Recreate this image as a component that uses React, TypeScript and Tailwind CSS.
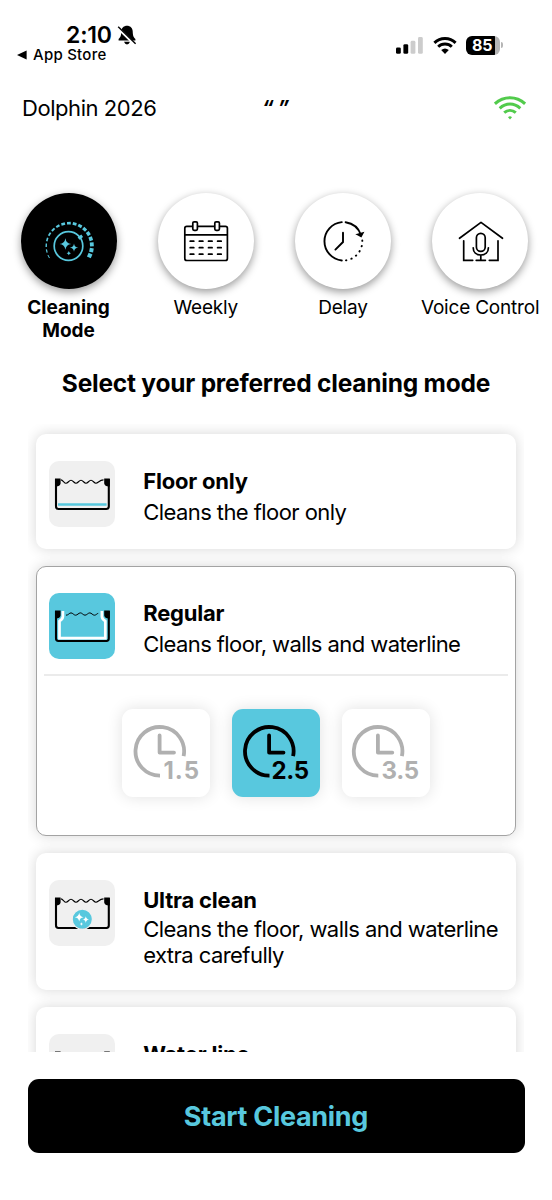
import type { ReactNode } from "react";

const ACCENT = "#58c8de";

function star(x: number, y: number, r: number) {
  const k = r * 0.12;
  return `M${x} ${y - r}Q${x + k} ${y - k} ${x + r} ${y}Q${x + k} ${y + k} ${x} ${y + r}Q${x - k} ${y + k} ${x - r} ${y}Q${x - k} ${y - k} ${x} ${y - r}Z`;
}

function DialIcon() {
  const cx = 48.3;
  const cy = 53;
  const count = 17;
  const ticks = Array.from({ length: count }, (_, i) => {
    const t = i / (count - 1);
    const a = ((153 + t * 232) * Math.PI) / 180;
    const half = 0.075 + t * 0.015;
    const r = 23.2 - t * 0.6;
    return {
      w: 1 + t * 3.2,
      d: `M${cx + r * Math.cos(a - half)} ${cy + r * Math.sin(a - half)}L${cx + r * Math.cos(a + half)} ${cy + r * Math.sin(a + half)}`,
    };
  });
  return (
    <svg viewBox="0 0 96 96" className="size-24" fill="none" stroke={ACCENT}>
      {ticks.map((t) => (
        <path key={t.d} d={t.d} strokeWidth={t.w} />
      ))}
      <circle cx="47.5" cy="53" r="14.3" strokeWidth="1.7" />
      <path d="M57.5 45.5L61.2 42.8" strokeWidth="3" />
      <path d={star(44.4, 51, 5.8) + star(53, 54.6, 4.2) + star(47.8, 60.2, 2.2)} fill={ACCENT} stroke="none" />
    </svg>
  );
}

function CalendarIcon() {
  return (
    <svg viewBox="0 0 96 96" className="size-24" fill="none" stroke="#000" strokeWidth="1.7">
      <rect x="26.8" y="33.3" width="42.6" height="34.2" rx="2" />
      <path d="M27 41.8H69.4" />
      <rect x="34.8" y="28.8" width="4.6" height="8.6" rx="1.3" fill="#fff" />
      <rect x="56.8" y="28.8" width="4.6" height="8.6" rx="1.3" fill="#fff" />
      {[48.2, 54.7, 61.2].map((y) => (
        <path key={y} d={`M32.2 ${y}h3.6M41.3 ${y}h3.6M50.5 ${y}h3.6M59.6 ${y}h3.6`} strokeLinecap="round" />
      ))}
    </svg>
  );
}

function DelayIcon() {
  return (
    <svg viewBox="0 0 96 96" className="size-24" fill="none" stroke="#000" strokeWidth="1.9" strokeLinecap="round">
      <path d="M46.8 29.1A19.3 19.3 0 0 0 46.8 67.5" />
      <path d="M50.6 29.2A19.3 19.3 0 0 1 66 42" />
      <path d="M62.8 41.5L66 43.3L67.6 40.2Z" fill="#000" />
      <path d="M67.3 47.5A19.3 19.3 0 0 1 49 67.6" strokeDasharray="0.4 5.1" />
      <path d="M48 39.8V49L40.4 56.6" />
    </svg>
  );
}

function VoiceIcon() {
  return (
    <svg viewBox="0 0 96 96" className="size-24" fill="none" stroke="#000" strokeWidth="1.7" strokeLinecap="round">
      <path d="M27.5 45.3L49 29.4L70.5 45.3" strokeLinejoin="round" />
      <path d="M31.7 47.8V67.3H40.7M66 47.8V67.3H57.3" />
      <rect x="44.4" y="40.4" width="8.8" height="18" rx="4.4" />
      <path d="M41.2 54.8C41.2 59.4 44.4 62 48.8 62S56.4 59.4 56.4 54.8M48.8 62V67.3M44.2 67.3H53.4" />
    </svg>
  );
}

type PoolKind = "floor" | "walls" | "ultra";

function PoolIcon({ kind }: { kind: PoolKind }) {
  return (
    <svg viewBox="0 0 66 66" className="size-[66px]" fill="none" stroke="#000">
      <path d="M7 18V45.6Q7 48 9.4 48H57.4Q59.8 48 59.8 45.6V18" strokeWidth="2.1" />
      <path d="M6 17.4H11.6V22.4Q11 25.2 7 25.6H6ZM60.8 17.4H55.2V22.4Q55.8 25.2 59.8 25.6H60.8Z" fill="#000" stroke="none" />
      {kind === "walls" ? (
        <>
          <path
            d="M17 22.2C19.5 22.2 20.2 19.9 22 19.9S24.8 22.2 26.6 22.2S29.6 19.9 31.4 19.9S34.2 22.2 36 22.2S39 19.9 40.8 19.9S43.6 22.2 45.4 22.2S48 20.4 49.2 20.4"
            strokeWidth="1"
          />
          <path
            d="M13.9 18V23.6Q13.8 26 10.5 28.2V45.2H56.3V28.2Q53 26 52.9 23.6V18"
            stroke="#fff"
            strokeWidth="2.7"
          />
        </>
      ) : (
        <path
          d="M12 18.9C14 18.9 15 22.3 17 22.3S20 19.2 22 19.2S25 22.3 27 22.3S30 19.2 32 19.2S35 22.3 37 22.3S40 19.2 42 19.2S45 22.3 47 22.3S50.5 18.9 54.5 18.9"
          strokeWidth="1.1"
        />
      )}
      {kind === "floor" && <path d="M9 43.6H57.6" stroke={ACCENT} strokeWidth="2.5" />}
      {kind === "ultra" && (
        <>
          <circle cx="33.3" cy="39.2" r="10.1" fill={ACCENT} stroke="#f0f0f0" strokeWidth="1.2" />
          <path d={star(30.2, 37.2, 4.4) + star(36.8, 39.6, 3.4) + star(32.4, 44, 1.7)} fill="#fff" stroke="none" />
        </>
      )}
    </svg>
  );
}

function Mode({ label, active, children }: { label: string; active?: boolean; children: ReactNode }) {
  return (
    <div className="flex w-[137.2px] shrink-0 flex-col items-center">
      <div
        className={
          active
            ? "size-24 rounded-full bg-black shadow-[0_3px_8px_rgba(0,0,0,0.4)]"
            : "size-24 rounded-full bg-white shadow-[0_3px_8px_rgba(0,0,0,0.4)]"
        }
      >
        {children}
      </div>
      <div
        className={
          active
            ? "mt-[7px] w-[100px] text-center text-[19px] font-bold leading-[23px]"
            : "mt-[7px] whitespace-nowrap text-center text-[19px] leading-[23px] tracking-[-0.2px]"
        }
      >
        {label}
      </div>
    </div>
  );
}

function Tile({ kind, active }: { kind: PoolKind; active?: boolean }) {
  return (
    <div className={active ? "size-[66px] shrink-0 rounded-[10px] bg-[#58c8de]" : "size-[66px] shrink-0 rounded-[10px] bg-[#f0f0f0]"}>
      <PoolIcon kind={kind} />
    </div>
  );
}

function Duration({ value, active, cx, tx }: { value: string; active?: boolean; cx: number; tx: number }) {
  const color = active ? "#000" : "#b0b0b0";
  return (
    <div
      className={
        active
          ? "size-[88px] rounded-[11px] bg-[#58c8de] shadow-[0_0_16px_rgba(0,0,0,0.12)]"
          : "size-[88px] rounded-[11px] bg-white shadow-[0_0_16px_rgba(0,0,0,0.12)]"
      }
    >
      <svg viewBox="0 0 88 88" className="size-[88px]" fill="none" stroke={color} strokeWidth="3.8">
        <path d={`M${cx + 23.6} 47.2A24.3 24.3 0 1 0 ${cx} 66.6`} />
        <path d={`M${cx - 0.4} 26.5V43.6H${cx + 14}`} strokeLinecap="round" strokeLinejoin="round" />
        <text x={tx} y="70" fill={color} stroke="none" textLength={77 - tx} className="font-[Inter] text-[24px] font-bold">
          {value}
        </text>
      </svg>
    </div>
  );
}

const card = "rounded-[10px] bg-white shadow-[0_0_14px_rgba(0,0,0,0.16)]";
const heading = "text-[22px] font-bold leading-[31px] tracking-[-0.2px]";

export default function App() {
  return (
    <div className="flex h-[1200px] w-[552px] flex-col overflow-hidden bg-white font-[Inter,sans-serif] text-black">
      <header className="flex h-[72px] shrink-0 justify-between pl-[17px] pr-[49px] pt-[21px]">
        <div>
          <div className="flex items-center gap-1.5 pl-[49px]">
            <span className="pt-px text-[23px] font-semibold leading-[26px] tracking-[-0.2px]">2:10</span>
            <svg viewBox="0 0 20 20" className="-ml-px size-5">
              <path d="M10 .8C6.9.8 4.5 3 4.3 6.3C4.1 10.6 3.8 12 1.6 14V15.4H18.4V14C16.2 12 15.9 10.6 15.7 6.3C15.5 3 13.1.8 10 .8ZM7 16.8Q8 19.4 10 19.4T13 16.8Z" />
              <path d="M1.2 3L17 18.8" stroke="#fff" strokeWidth="3" />
              <path d="M1.2 1.8L18.6 18.8" stroke="#000" strokeWidth="1.4" />
            </svg>
          </div>
          <div className="flex items-center gap-1.5 text-[15px] font-medium leading-[14px] tracking-[0.25px]">
            <svg viewBox="0 0 10 10" className="size-2.5">
              <path d="M0 5L9.6 .6V9.4Z" />
            </svg>
            App Store
          </div>
        </div>
        <div className="flex h-[20px] items-center pt-[24px]">
          <svg viewBox="0 0 28 18" className="mr-[9px] h-[18px] w-7">
            <rect x="0" y="11.4" width="4.8" height="6.4" rx="1.4" />
            <rect x="7.4" y="8.2" width="4.8" height="9.6" rx="1.4" />
            <rect x="14.6" y="4.8" width="4.8" height="13" rx="1.4" fill="#ccc" />
            <rect x="22" y="1" width="4.8" height="16.8" rx="1.4" fill="#ccc" />
          </svg>
          <svg viewBox="0 0 24 18" className="mr-[9px] h-[18px] w-6" fill="none" stroke="#000" strokeWidth="2.9">
            <path d="M1.4 6.9C7.2 1.1 16.8 1.1 22.6 6.9M5.2 10.8C8.9 7.1 15.1 7.1 18.8 10.8" />
            <path d="M8.2 14.1Q12 10.9 15.8 14.1L12 18Z" fill="#000" stroke="none" />
          </svg>
          <div className="flex items-center">
            <div className="flex h-[19px] w-[34px] items-center rounded-[6px] bg-[linear-gradient(90deg,#000_29px,#b5b5b5_29px)] pl-[6px] text-[16px] font-bold leading-none tracking-[-0.1px] text-white">
              85
            </div>
            <div className="ml-[1px] h-[6px] w-[2px] rounded-r-full bg-[#b5b5b5]" />
          </div>
        </div>
      </header>

      <div className="flex h-[72px] shrink-0 items-center pl-[22px] pr-[26px]">
        <div className="w-[240px] text-[22px] leading-7 tracking-[-0.45px]">Dolphin 2026</div>
        <div className="text-[20px] font-bold italic leading-7 tracking-[-0.3px]">“ ”</div>
        <svg viewBox="0 0 32 24" className="ml-auto h-6 w-8" fill="none" stroke="#52cb4c" strokeWidth="3">
          <path d="M.9 7.8C9.6 -.3 22.4 -.3 31.1 7.8M5.7 12.3C11.9 6.7 20.1 6.7 26.3 12.3M10.2 16.7C13.6 13.7 18.4 13.7 21.8 16.7" />
          <path d="M14 21.2Q16 19.2 18 21.2L16 23.4Z" fill="#52cb4c" stroke="none" />
        </svg>
      </div>

      <nav className="mt-[49px] flex h-[150px] shrink-0">
        <Mode label="Cleaning Mode" active>
          <DialIcon />
        </Mode>
        <Mode label="Weekly">
          <CalendarIcon />
        </Mode>
        <Mode label="Delay">
          <DelayIcon />
        </Mode>
        <Mode label="Voice Control">
          <VoiceIcon />
        </Mode>
      </nav>

      <h1 className="mt-[24px] shrink-0 text-center text-[24.5px] font-bold leading-[32px] tracking-[-0.22px]">
        Select your preferred cleaning mode
      </h1>

      <main className="mx-7 mt-[25px] flex h-[628px] shrink-0 flex-col gap-[17px] overflow-hidden px-2 pt-[10px]">
        <section className={`${card} flex h-[115px] shrink-0 gap-7 pl-[13.2px] pt-[27px]`}>
          <Tile kind="floor" />
          <div className="pt-[5px]">
            <h2 className={heading}>Floor only</h2>
            <p className="text-[22px] leading-[31px] tracking-[-0.57px]">Cleans the floor only</p>
          </div>
        </section>

        <section className={`${card} flex h-[270px] shrink-0 flex-col border border-[#a3a3a3] px-[7px]`}>
          <div className="flex h-[109px] gap-7 border-b-2 border-[#ebebeb] pl-[5.2px] pt-[26px]">
            <Tile kind="walls" active />
            <div className="pt-[5px]">
              <h2 className={heading}>Regular</h2>
              <p className="text-[22px] leading-[31px] tracking-[-0.57px]">Cleans floor, walls and waterline</p>
            </div>
          </div>
          <div className="flex justify-center gap-[22px] pt-[32.6px]">
            <Duration value="1.5" cx={38} tx={41.5} />
            <Duration value="2.5" cx={37.5} tx={39.5} active />
            <Duration value="3.5" cx={36.3} tx={39.5} />
          </div>
        </section>

        <section className={`${card} flex h-[137px] shrink-0 gap-7 pl-[13.2px] pt-[27px]`}>
          <Tile kind="ultra" />
          <div className="pt-[5px]">
            <h2 className={heading}>Ultra clean</h2>
            <p className="w-[368px] text-[22px] leading-[26px] tracking-[-0.55px]">
              Cleans the floor, walls and waterline extra carefully
            </p>
          </div>
        </section>

        <section className={`${card} flex h-[137px] shrink-0 gap-7 pl-[13.2px] pt-[27px]`}>
          <Tile kind="floor" />
          <div className="pt-[5px]">
            <h2 className={heading}>Water line</h2>
          </div>
        </section>
      </main>

      <button className="ml-[27.5px] mt-[27px] h-[74px] w-[497px] shrink-0 rounded-[11px] bg-black pt-[2px] text-[27px] font-bold tracking-[-0.3px] text-[#58c8de]">
        Start Cleaning
      </button>
    </div>
  );
}
